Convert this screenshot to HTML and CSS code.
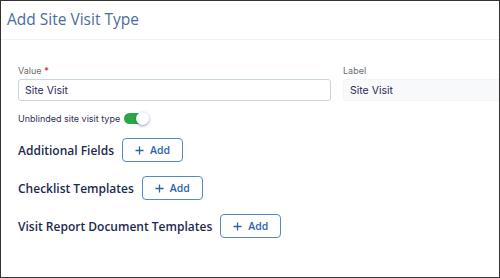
FILE: index.html
```html
<!DOCTYPE html>
<html lang="en">
<head>
    <meta charset="UTF-8">
    <title>Add Site Visit Type</title>
    <link rel="stylesheet" href="styles.css">
</head>
<body>
    <div class="dialog">
        <div class="dialog-header">
            <h1>Add Site Visit Type</h1>
        </div>

        <div class="dialog-body">
            <div class="form-row">
                <div class="field">
                    <label class="field-label">Value <span class="required">*</span></label>
                    <input type="text" class="text-input" value="Site Visit">
                </div>
                <div class="field">
                    <label class="field-label">Label</label>
                    <input type="text" class="text-input readonly" value="Site Visit" readonly>
                </div>
            </div>

            <div class="switch-row">
                <span class="switch-text">Unblinded site visit type</span>
                <span class="switch on"><span class="knob"></span></span>
            </div>

            <div class="section">
                <h2>Additional Fields</h2>
                <button class="add-button">
                    <svg class="plus" width="9" height="9" viewBox="0 0 9 9"><path d="M4.5 0.5v8M0.5 4.5h8" stroke="currentColor" stroke-width="1.3"/></svg>
                    Add
                </button>
            </div>
            <div class="section">
                <h2>Checklist Templates</h2>
                <button class="add-button">
                    <svg class="plus" width="9" height="9" viewBox="0 0 9 9"><path d="M4.5 0.5v8M0.5 4.5h8" stroke="currentColor" stroke-width="1.3"/></svg>
                    Add
                </button>
            </div>
            <div class="section">
                <h2>Visit Report Document Templates</h2>
                <button class="add-button">
                    <svg class="plus" width="9" height="9" viewBox="0 0 9 9"><path d="M4.5 0.5v8M0.5 4.5h8" stroke="currentColor" stroke-width="1.3"/></svg>
                    Add
                </button>
            </div>
        </div>
    </div>
</body>
</html>
```

FILE: styles.css
```css
html, body {
    margin: 0;
    padding: 0;
}
body {
    font-family: "Open Sans", Arial, sans-serif;
    background: white;
}
.dialog {
    box-sizing: border-box;
    width: 500px;
    height: 278px;
    border: 1px solid #333;
    overflow: hidden;
    background: #fff;
}
.dialog-header {
    height: 38px;
    border-bottom: 1px solid #edf2f2;
    padding-left: 6px;
    display: flex;
    align-items: center;
}
.dialog-header h1 {
    margin: 0;
    font-size: 15.5px;
    font-weight: 400;
    color: #4a6da0;
    margin-top: -3px;
}
.dialog-body {
    padding: 25px 0 0 17px;
}
.form-row {
    display: grid;
    grid-template-columns: 313px 200px;
    gap: 12px;
}
.field {
    display: flex;
    flex-direction: column;
}
.field-label {
    font-family: Inter, sans-serif;
    font-size: 9px;
    color: #6b6b6b;
    margin-bottom: 3px;
}
.required {
    color: #e8343f;
    font-weight: 700;
}
.text-input {
    box-sizing: border-box;
    height: 22px;
    border: 1px solid #c9d4e6;
    border-radius: 3px;
    padding: 0 6px;
    font-family: Inter, sans-serif;
    font-size: 10.5px;
    color: #2b2a55;
    background: #fff;
}
.text-input.readonly {
    border-color: #f3f4f7;
    background: #f8f9fb;
}
.switch-row {
    display: flex;
    align-items: center;
    gap: 4px;
    margin-top: 12px;
}
.switch-text {
    font-family: Inter, sans-serif;
    font-size: 9px;
    color: #2e2f55;
}
.switch {
    position: relative;
    width: 24px;
    height: 11px;
    border-radius: 6px;
    background: #2aa845;
}
.switch.on .knob {
    position: absolute;
    right: -1px;
    top: -1px;
    width: 13px;
    height: 13px;
    border-radius: 50%;
    background: #fff;
    box-shadow: 0 1px 3px rgba(40, 50, 120, 0.5);
}
.section {
    display: flex;
    align-items: center;
    gap: 8px;
    margin-top: 14px;
}
.section h2 {
    margin: 0;
    font-size: 12px;
    font-weight: 600;
    color: #1c2a4f;
}
.add-button {
    box-sizing: border-box;
    width: 61px;
    height: 24px;
    border: 1px solid #5a88c4;
    border-radius: 4px;
    background: #fff;
    color: #2d62a6;
    font-family: "Open Sans", Arial, sans-serif;
    font-size: 10.5px;
    font-weight: 600;
    padding: 0;
    display: flex;
    align-items: center;
    justify-content: center;
    gap: 6px;
}
```
